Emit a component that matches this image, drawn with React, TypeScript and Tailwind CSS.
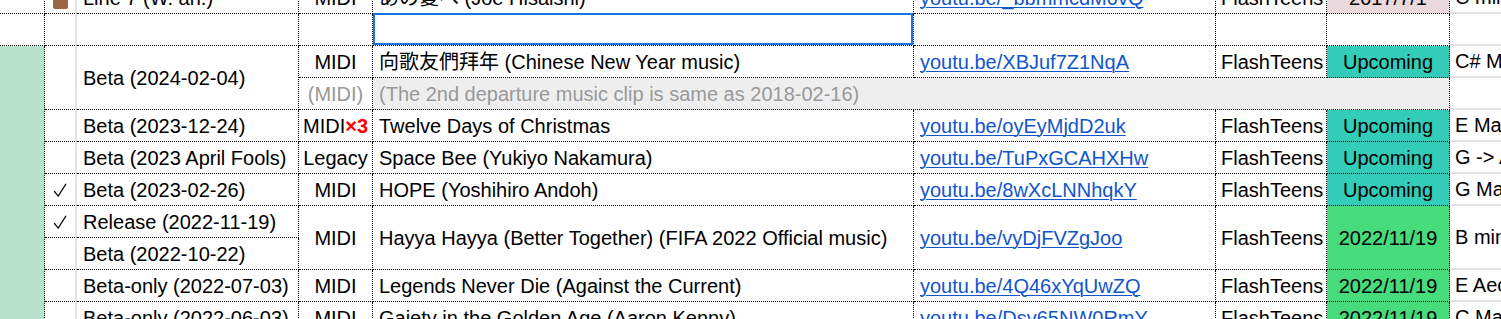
import type { ReactNode } from "react";

const base =
  "flex items-center overflow-hidden whitespace-nowrap border-b border-r border-dotted border-black";

type CellProps = {
  className?: string;
  children?: ReactNode;
};

const Cell = ({ className = "", children }: CellProps) => (
  <div className={`${base} ${className}`}>{children}</div>
);

const Link = ({ href }: { href: string }) => (
  <span className="text-[#1155cc] underline decoration-1 underline-offset-2">{href}</span>
);

const Check = () => (
  <svg width="14" height="15" viewBox="0 0 14 15" className="mt-[1px]">
    <path d="M1.5 8.5 L5.2 13.2 L12.8 1.2" fill="none" stroke="#111" strokeWidth="1.3" strokeLinecap="round" strokeLinejoin="round" />
  </svg>
);

const App = () => {
  return (
    <div
      className="h-[319px] w-full overflow-hidden bg-white text-[20px] leading-none text-black"
      style={{ fontFamily: '"Liberation Sans", Arial, "Noto Sans CJK TC", "Noto Sans CJK JP", sans-serif' }}
    >
      <div className="-mt-[18px] grid grid-cols-[45px_32px_222px_74px_541px_302px_111px_123px_320px] grid-rows-[repeat(11,32px)]">
        {/* Column A */}
        <Cell className="col-start-1 row-start-1" />
        <Cell className="col-start-1 row-start-2" />
        <Cell className="col-start-1 row-start-3 row-span-9 bg-[#b7e1cd]" />

        {/* Column B: check marks */}
        <Cell className="col-start-2 row-start-1 justify-center border-r-2 [border-right-style:solid] border-r-[#e2e2e2]">
          <span className="mt-[7px] block h-[15px] w-[15px] rounded-[2px] bg-[#9c6644]" />
        </Cell>
        <Cell className="col-start-2 row-start-2 border-r-2 [border-right-style:solid] border-r-[#e2e2e2]" />
        <Cell className="col-start-2 row-start-3 row-span-2 border-r-2 [border-right-style:solid] border-r-[#e2e2e2]" />
        <Cell className="col-start-2 row-start-5 border-r-2 [border-right-style:solid] border-r-[#e2e2e2]" />
        <Cell className="col-start-2 row-start-6 border-r-2 [border-right-style:solid] border-r-[#e2e2e2]" />
        <Cell className="col-start-2 row-start-7 justify-center border-r-2 [border-right-style:solid] border-r-[#e2e2e2]">
          <Check />
        </Cell>
        <Cell className="col-start-2 row-start-8 justify-center border-r-2 [border-right-style:solid] border-r-[#e2e2e2]">
          <Check />
        </Cell>
        <Cell className="col-start-2 row-start-9 border-r-2 [border-right-style:solid] border-r-[#e2e2e2]" />
        <Cell className="col-start-2 row-start-10 border-r-2 [border-right-style:solid] border-r-[#e2e2e2]" />
        <Cell className="col-start-2 row-start-11 border-r-2 [border-right-style:solid] border-r-[#e2e2e2]" />

        {/* Column C: version */}
        <Cell className="col-start-3 row-start-1 pl-[6px]">Line 7 (W. an.)</Cell>
        <Cell className="col-start-3 row-start-2" />
        <Cell className="col-start-3 row-start-3 row-span-2 pl-[6px]">Beta (2024-02-04)</Cell>
        <Cell className="col-start-3 row-start-5 pl-[6px]">Beta (2023-12-24)</Cell>
        <Cell className="col-start-3 row-start-6 pl-[6px]">Beta (2023 April Fools)</Cell>
        <Cell className="col-start-3 row-start-7 pl-[6px]">Beta (2023-02-26)</Cell>
        <Cell className="col-start-3 row-start-8 pl-[6px]">Release (2022-11-19)</Cell>
        <Cell className="col-start-3 row-start-9 pl-[6px]">Beta (2022-10-22)</Cell>
        <Cell className="col-start-3 row-start-10 pl-[6px]">Beta-only (2022-07-03)</Cell>
        <Cell className="col-start-3 row-start-11 pl-[6px]">Beta-only (2022-06-03)</Cell>

        {/* Column D: format */}
        <Cell className="col-start-4 row-start-1 justify-center">MIDI</Cell>
        <Cell className="col-start-4 row-start-2" />
        <Cell className="col-start-4 row-start-3 justify-center">MIDI</Cell>
        <Cell className="col-start-4 row-start-4 justify-center text-[#999]">(MIDI)</Cell>
        <Cell className="col-start-4 row-start-5 justify-center">
          MIDI<span className="font-bold text-[#ff0000]">×3</span>
        </Cell>
        <Cell className="col-start-4 row-start-6 justify-center">Legacy</Cell>
        <Cell className="col-start-4 row-start-7 justify-center">MIDI</Cell>
        <Cell className="col-start-4 row-start-8 row-span-2 justify-center">MIDI</Cell>
        <Cell className="col-start-4 row-start-10 justify-center">MIDI</Cell>
        <Cell className="col-start-4 row-start-11 justify-center">MIDI</Cell>

        {/* Row 1 (scrolled, partly hidden) */}
        <Cell className="col-start-5 row-start-1 pl-[6px]">あの夏へ (Joe Hisaishi)</Cell>
        <Cell className="col-start-6 row-start-1 pl-[6px]"><Link href="youtu.be/_bbmmcdM0vQ" /></Cell>
        <Cell className="col-start-7 row-start-1 pl-[5px]">FlashTeens</Cell>
        <Cell className="col-start-8 row-start-1 justify-center bg-[#ead9dc]">2017/7/1</Cell>

        {/* Row 2: empty, selected */}
        <div className="relative col-start-5 row-start-2 border-b border-r border-dotted border-black">
          <div className="absolute -top-px bottom-0 left-0 right-0 border-2 border-[#1a73e8]" />
        </div>
        <Cell className="col-start-6 row-start-2" />
        <Cell className="col-start-7 row-start-2" />
        <Cell className="col-start-8 row-start-2" />

        {/* Beta 2024-02-04 */}
        <Cell className="col-start-5 row-start-3 pl-[6px]">向歌友們拜年 (Chinese New Year music)</Cell>
        <Cell className="col-start-6 row-start-3 pl-[6px]"><Link href="youtu.be/XBJuf7Z1NqA" /></Cell>
        <Cell className="col-start-7 row-start-3 pl-[5px]">FlashTeens</Cell>
        <Cell className="col-start-8 row-start-3 justify-center bg-[#33ccb8]">Upcoming</Cell>
        <Cell className="col-start-5 col-span-4 row-start-4 bg-[#eeeeee] pl-[6px] text-[#999]">
          (The 2nd departure music clip is same as 2018-02-16)
        </Cell>

        {/* Beta 2023-12-24 */}
        <Cell className="col-start-5 row-start-5 pl-[6px]">Twelve Days of Christmas</Cell>
        <Cell className="col-start-6 row-start-5 pl-[6px]"><Link href="youtu.be/oyEyMjdD2uk" /></Cell>
        <Cell className="col-start-7 row-start-5 pl-[5px]">FlashTeens</Cell>
        <Cell className="col-start-8 row-start-5 justify-center bg-[#33ccb8]">Upcoming</Cell>

        {/* Beta 2023 April Fools */}
        <Cell className="col-start-5 row-start-6 pl-[6px]">Space Bee (Yukiyo Nakamura)</Cell>
        <Cell className="col-start-6 row-start-6 pl-[6px]"><Link href="youtu.be/TuPxGCAHXHw" /></Cell>
        <Cell className="col-start-7 row-start-6 pl-[5px]">FlashTeens</Cell>
        <Cell className="col-start-8 row-start-6 justify-center bg-[#33ccb8]">Upcoming</Cell>

        {/* Beta 2023-02-26 */}
        <Cell className="col-start-5 row-start-7 pl-[6px]">HOPE (Yoshihiro Andoh)</Cell>
        <Cell className="col-start-6 row-start-7 pl-[6px]"><Link href="youtu.be/8wXcLNNhqkY" /></Cell>
        <Cell className="col-start-7 row-start-7 pl-[5px]">FlashTeens</Cell>
        <Cell className="col-start-8 row-start-7 justify-center bg-[#33ccb8]">Upcoming</Cell>

        {/* Release 2022-11-19 / Beta 2022-10-22 */}
        <Cell className="col-start-5 row-start-8 row-span-2 pl-[6px]">
          Hayya Hayya (Better Together) (FIFA 2022 Official music)
        </Cell>
        <Cell className="col-start-6 row-start-8 row-span-2 pl-[6px]"><Link href="youtu.be/vyDjFVZgJoo" /></Cell>
        <Cell className="col-start-7 row-start-8 row-span-2 pl-[5px]">FlashTeens</Cell>
        <Cell className="col-start-8 row-start-8 row-span-2 justify-center bg-[#46db7b]">2022/11/19</Cell>

        {/* Beta-only 2022-07-03 */}
        <Cell className="col-start-5 row-start-10 pl-[6px]">Legends Never Die (Against the Current)</Cell>
        <Cell className="col-start-6 row-start-10 pl-[6px]"><Link href="youtu.be/4Q46xYqUwZQ" /></Cell>
        <Cell className="col-start-7 row-start-10 pl-[5px]">FlashTeens</Cell>
        <Cell className="col-start-8 row-start-10 justify-center bg-[#46db7b]">2022/11/19</Cell>

        {/* Beta-only 2022-06-03 */}
        <Cell className="col-start-5 row-start-11 pl-[6px]">Gaiety in the Golden Age (Aaron Kenny)</Cell>
        <Cell className="col-start-6 row-start-11 pl-[6px]"><Link href="youtu.be/Dsv65NW0RmY" /></Cell>
        <Cell className="col-start-7 row-start-11 pl-[5px]">FlashTeens</Cell>
        <Cell className="col-start-8 row-start-11 justify-center bg-[#46db7b]">2022/11/19</Cell>

        {/* Column I: key */}
        <div className="col-start-9 row-start-1 flex items-center whitespace-nowrap border-b-2 border-[#e2e2e2] pl-[5px]">C minor</div>
        <div className="col-start-9 row-start-2 border-b-2 border-[#e2e2e2]" />
        <div className="col-start-9 row-start-3 flex items-center whitespace-nowrap border-b-2 border-[#e2e2e2] pl-[5px]">C# Major</div>
        <div className="col-start-9 row-start-4 border-b-2 border-[#e2e2e2]" />
        <div className="col-start-9 row-start-5 flex items-center whitespace-nowrap border-b-2 border-[#e2e2e2] pl-[5px]">E Major</div>
        <div className="col-start-9 row-start-6 flex items-center whitespace-nowrap border-b-2 border-[#e2e2e2] pl-[5px]">G -&gt; A Major</div>
        <div className="col-start-9 row-start-7 flex items-center whitespace-nowrap border-b-2 border-[#e2e2e2] pl-[5px]">G Major</div>
        <div className="col-start-9 row-start-8 row-span-2 flex items-center whitespace-nowrap border-b-2 border-[#e2e2e2] pl-[5px]">B minor</div>
        <div className="col-start-9 row-start-10 flex items-center whitespace-nowrap border-b-2 border-[#e2e2e2] pl-[5px]">E Aeolian</div>
        <div className="col-start-9 row-start-11 flex items-center whitespace-nowrap border-b-2 border-[#e2e2e2] pl-[5px]">C Major</div>
      </div>
    </div>
  );
};

export default App;
